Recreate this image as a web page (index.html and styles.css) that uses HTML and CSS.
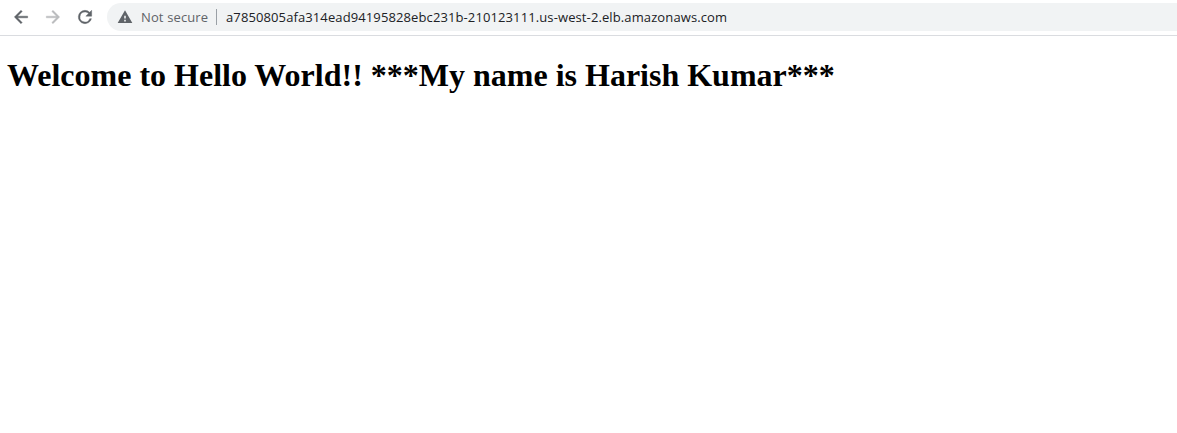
FILE: index.html
```html
<!DOCTYPE html>
<html lang="en">
<head>
<meta charset="utf-8">
<title>Hello World</title>
<link rel="stylesheet" href="styles.css">
</head>
<body>
<header class="toolbar">
  <nav class="nav">
    <svg class="icon" viewBox="0 0 24 24"><path d="M20 11H7.83l5.59-5.59L12 4l-8 8 8 8 1.41-1.41L7.83 13H20v-2z"/></svg>
    <svg class="icon icon-off" viewBox="0 0 24 24"><path d="M4 11h12.17l-5.59-5.59L12 4l8 8-8 8-1.41-1.41L16.17 13H4v-2z"/></svg>
    <svg class="icon" viewBox="0 0 24 24"><path d="M17.65 6.35A7.96 7.96 0 0 0 12 4a8 8 0 1 0 7.73 10h-2.08A6 6 0 1 1 12 6c1.66 0 3.14.69 4.22 1.78L13 11h7V4l-2.35 2.35z"/></svg>
  </nav>
  <div class="address">
    <svg class="warn" viewBox="0 0 24 24"><path d="M1 21h22L12 2 1 21zm12.2-2.4h-2.4v-2.4h2.4v2.4zm0-4.2h-2.4V10h2.4v4.4z"/></svg>
    <span class="status">Not secure</span>
    <span class="divider"></span>
    <span class="url">a7850805afa314ead94195828ebc231b-210123111.us-west-2.elb.amazonaws.com</span>
  </div>
</header>
<main class="page"><h1 class="title">Welcome to Hello World!! ***My name is Harish Kumar***</h1></main>
</body>
</html>
```
FILE: styles.css
```css
body { margin: 0; background: #fff; color: #000; overflow: hidden; }
.toolbar { box-sizing: border-box; height: 36px; display: flex; align-items: flex-start; padding: 3px 0 0 11px; border-bottom: 1px solid #dadce0; }
.nav { display: flex; align-items: center; gap: 12px; height: 28px; width: 96px; }
.icon { flex: none; width: 20px; height: 20px; fill: #5f6368; stroke: #5f6368; stroke-width: 0.5; }
.icon-off { fill: #babcbe; stroke: #babcbe; }
.address { flex: 1; height: 28px; display: flex; align-items: center; background: #f1f3f4; border-radius: 14px 0 0 14px; padding-left: 10px; font: 13px/28px "Open Sans", "Noto Sans", sans-serif; white-space: nowrap; }
.warn { width: 16px; height: 16px; margin-right: 8px; fill: #5f6368; }
.status { width: 75px; color: #5f6368; letter-spacing: 0.13px; }
.divider { width: 1px; height: 16px; margin-right: 9px; background: #9aa0a6; }
.url { color: #202124; letter-spacing: 0.11px; }
.page { padding: 0 7px; }
.title { margin: 21px 0; font: bold 32px/37px "Liberation Serif", serif; white-space: nowrap; }
```
